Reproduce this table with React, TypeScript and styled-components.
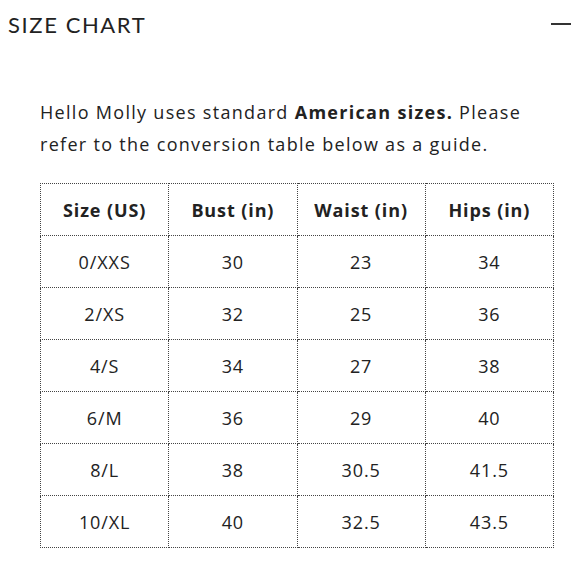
import React from "react";
import styled, { createGlobalStyle } from "styled-components";

const GlobalStyle = createGlobalStyle`
  body {
    margin: 0;
    background: #ffffff;
    font-family: "Open Sans", "Liberation Sans", sans-serif;
    color: #1f1f1f;
  }
`;

const Page = styled.div`
  width: 580px;
  height: 580px;
  overflow: hidden;
  box-sizing: border-box;
`;

const Header = styled.div`
  display: flex;
  align-items: center;
  justify-content: space-between;
  height: 48px;
  padding: 0 9px 0 8px;
`;

const Title = styled.h2`
  margin: 0;
  font-family: "Lato", "Liberation Sans", sans-serif;
  font-size: 22px;
  font-weight: 400;
  letter-spacing: 1.6px;
  color: #222;
`;

const Collapse = styled.span`
  display: block;
  width: 20px;
  height: 2px;
  background: #333;
`;

const Body = styled.div`
  padding: 48px 26px 0 40px;
`;

const Intro = styled.p`
  margin: 0 0 23px;
  max-width: 500px;
  font-size: 18px;
  line-height: 32px;
  letter-spacing: 1.3px;
  color: #222;

  strong {
    font-weight: 700;
  }
`;

const Table = styled.table`
  border-collapse: collapse;
  width: 514px;
  table-layout: fixed;
`;

const Cell = styled.td<{ $head?: boolean }>`
  border: 1px dotted #444;
  height: 51px;
  padding: 0;
  text-align: center;
  font-size: 18px;
  letter-spacing: 0.9px;
  font-weight: ${(p) => (p.$head ? 700 : 400)};
  color: #222;
`;

const headers = ["Size (US)", "Bust (in)", "Waist (in)", "Hips (in)"];

const rows = [
  ["0/XXS", "30", "23", "34"],
  ["2/XS", "32", "25", "36"],
  ["4/S", "34", "27", "38"],
  ["6/M", "36", "29", "40"],
  ["8/L", "38", "30.5", "41.5"],
  ["10/XL", "40", "32.5", "43.5"],
];

const App: React.FC = () => {
  return (
    <Page>
      <GlobalStyle />
      <Header>
        <Title>SIZE CHART</Title>
        <Collapse />
      </Header>
      <Body>
        <Intro>
          Hello Molly uses standard <strong>American sizes.</strong> Please
          refer to the conversion table below as a guide.
        </Intro>
        <Table>
          <thead>
            <tr>
              {headers.map((h) => (
                <Cell as="th" $head key={h}>
                  {h}
                </Cell>
              ))}
            </tr>
          </thead>
          <tbody>
            {rows.map((r) => (
              <tr key={r[0]}>
                {r.map((c, i) => (
                  <Cell key={i}>{c}</Cell>
                ))}
              </tr>
            ))}
          </tbody>
        </Table>
      </Body>
    </Page>
  );
};

export default App;
